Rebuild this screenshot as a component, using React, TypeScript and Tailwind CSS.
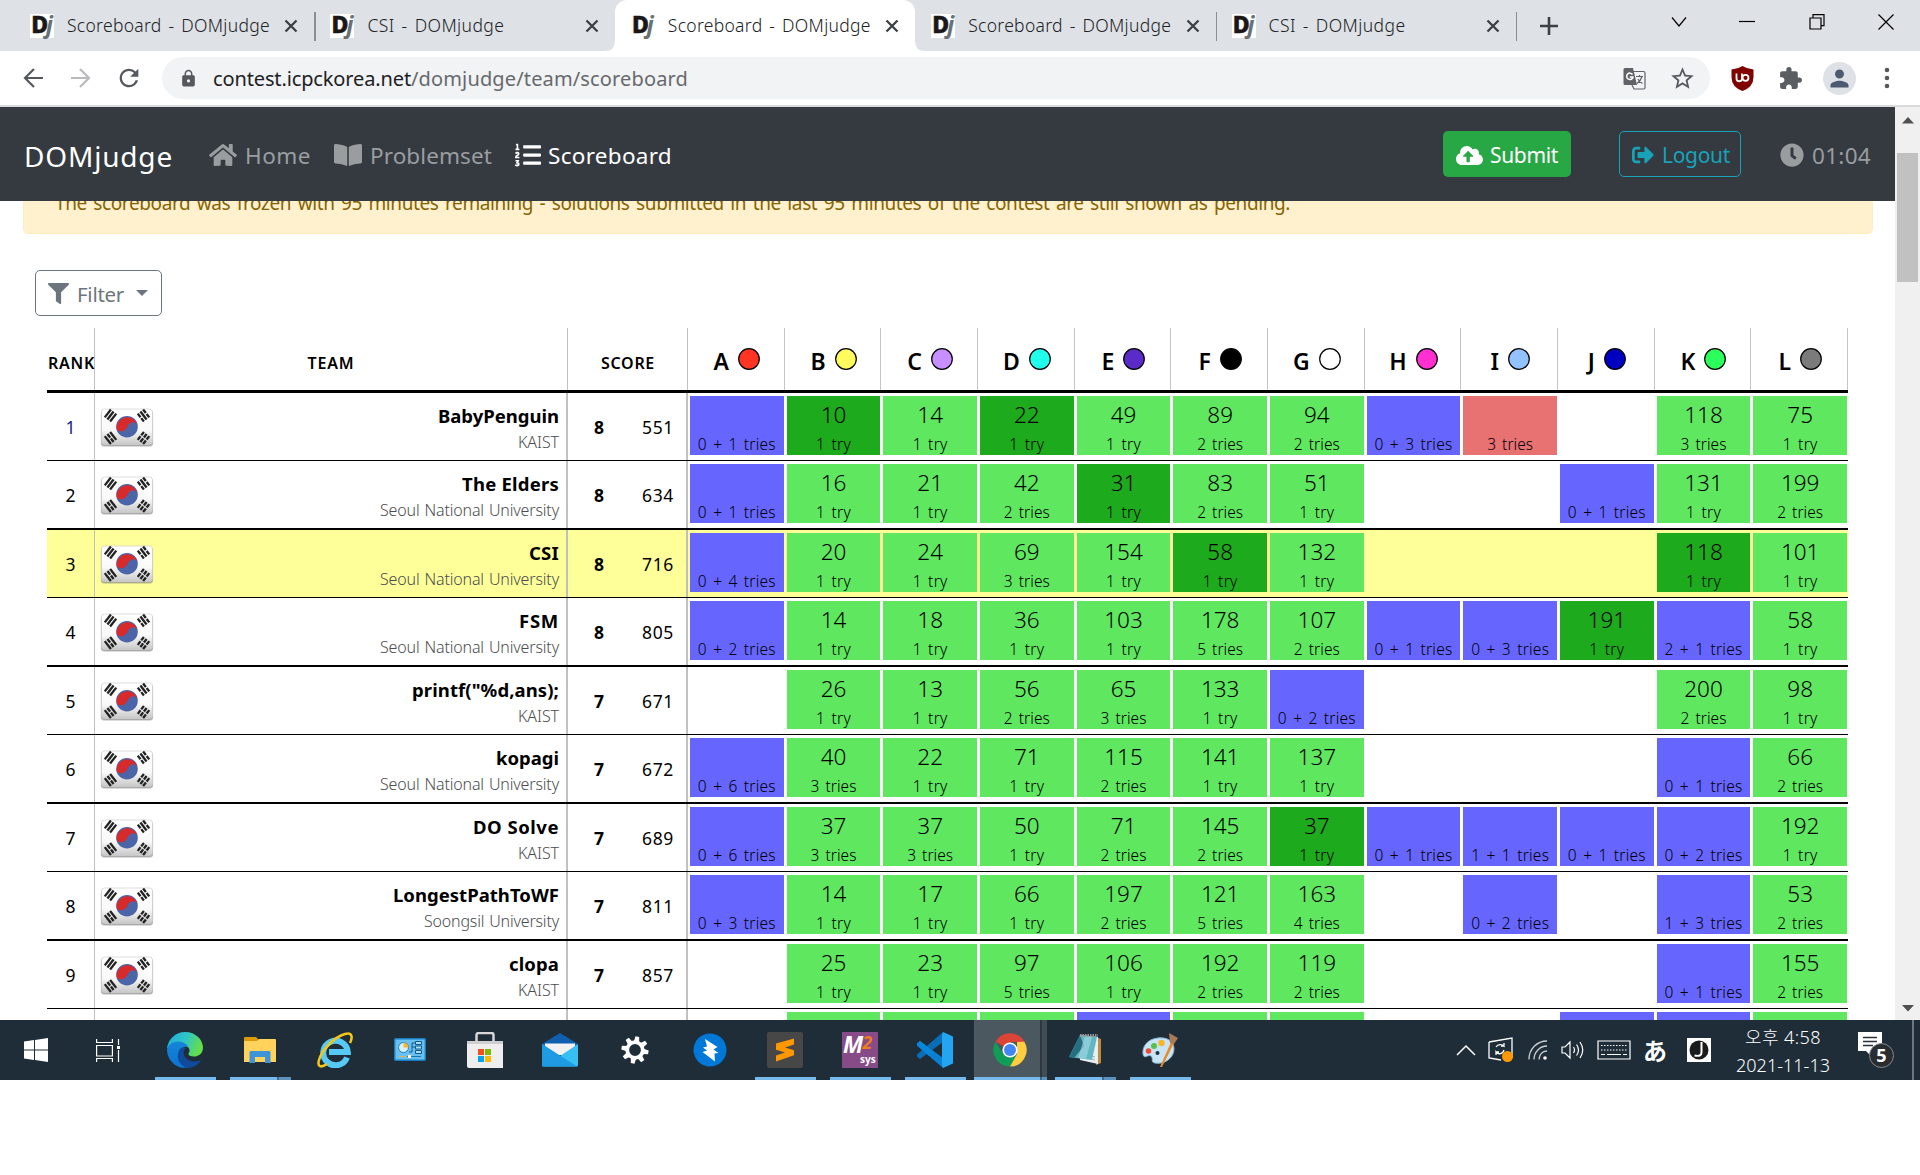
import { useLayoutEffect, useRef } from "react";
import type { ReactNode } from "react";
import { FaHome, FaBookOpen, FaListOl, FaCloudUploadAlt, FaSignOutAlt, FaClock, FaFilter } from "react-icons/fa";
import { MdStarBorder, MdExtension, MdLock, MdRefresh, MdPerson } from "react-icons/md";

/* Tracks a run of text so that it spans exactly `w` pixels. */
function Fit({ w, className = "", children }: { w: number; className?: string; children: ReactNode }) {
  const ref = useRef<HTMLSpanElement>(null);
  useLayoutEffect(() => {
    const el = ref.current;
    if (!el) return;
    el.style.letterSpacing = "0px";
    const n = (el.textContent || "").length;
    el.style.letterSpacing = (w - el.getBoundingClientRect().width) / n + "px";
  }, [w]);
  return (
    <span ref={ref} className={"inline-block whitespace-pre " + className}>
      {children}
    </span>
  );
}

const tabs = [
  { t: "Scoreboard - DOMjudge", w: 203 },
  { t: "CSI - DOMjudge", w: 137 },
  { t: "Scoreboard - DOMjudge", w: 203, active: true },
  { t: "Scoreboard - DOMjudge", w: 203 },
  { t: "CSI - DOMjudge", w: 137 },
];

function Tab({ t, w, active, sep }: { t: string; w: number; active?: boolean; sep: boolean }) {
  return (
    <div className={"relative flex h-[51px] w-[300.4px] items-center " + (active ? "rounded-t-xl bg-white" : "")}>
      {active && (
        <>
          <svg className="absolute bottom-0 -left-[10px]" width="10" height="10"><path d="M10 0v10H0Q10 10 10 0" fill="#fff" /></svg>
          <svg className="absolute -right-[10px] bottom-0" width="10" height="10"><path d="M0 0v10h10Q0 10 0 0" fill="#fff" /></svg>
        </>
      )}
      <div className="ml-[16px] flex h-6 w-6 items-center justify-center bg-white text-[23px] leading-6 font-extrabold tracking-[-2px] text-[#1b1718]">
        <span className="-mt-[4px] ml-[-2px] [-webkit-text-stroke:0.6px_#1b1718]">D</span><span className="-mt-[4px] font-bold text-[#6a7074] italic">j</span>
      </div>
      <div className="ml-[13px] flex-1 text-[17.500px] font-light text-[#202225] [word-spacing:2px]"><Fit w={w}>{t}</Fit></div>
      <svg className="mr-[16px]" width="14" height="14" viewBox="0 0 14 14"><path d="M1.500 1.500l11 11m0-11l-11 11" stroke="#3c4043" strokeWidth="2.300" /></svg>
      {sep && <div className="absolute top-3 -right-[1.500px] h-[29px] w-[1.500px] bg-[#8b8f94]" />}
    </div>
  );
}

function Browser() {
  return (
    <>
      <div className="flex h-[51px] bg-[#dee1e6] pl-[14px]">
        {tabs.map((t, i) => (
          <Tab key={i} {...t} sep={i !== 1 && i !== 2} />
        ))}
        <svg className="mt-[16px] ml-[23px]" width="20" height="20"><path d="M10 1v18M1 10h18" stroke="#3c4043" strokeWidth="2.600" /></svg>
        <div className="ml-auto flex pt-[14px] pr-[26px] text-black">
          <svg width="16" height="16" fill="none" stroke="currentColor" strokeWidth="1.200"><path d="M1 3.500l7 8.500 7-8.500" /></svg>
          <svg className="ml-[52px]" width="16" height="16" stroke="currentColor" strokeWidth="1.200"><path d="M0 7.500h16" /></svg>
          <svg className="ml-[54px]" width="16" height="16" fill="none" stroke="currentColor" strokeWidth="1.200"><path d="M1 4h11v11H1zM4 4V.7h11v11h-3" /></svg>
          <svg className="ml-[53px]" width="16" height="16" stroke="currentColor" strokeWidth="1.200"><path d="M.5.5l15 15m0-15l-15 15" /></svg>
        </div>
      </div>
      <div className="flex h-[56px] items-center border-b-2 border-[#d9dadc] bg-white">
        <svg className="ml-[23px]" width="20" height="20" fill="none" stroke="#55595e" strokeWidth="2.200"><path d="M20 10H2M11 1L2 10l9 9" /></svg>
        <svg className="ml-[28px]" width="20" height="20" fill="none" stroke="#b8babd" strokeWidth="2.200"><path d="M0 10h18M9 1l9 9-9 9" /></svg>
        <MdRefresh className="ml-[24px] text-[#55595e]" size={28} />
        <div className="ml-[19px] flex h-[42px] w-[1548px] items-center rounded-full bg-[#f1f3f4]">
          <MdLock className="ml-[17px] text-[#55595e]" size={19} />
          <div className="mt-[2px] ml-[15px] text-[20px] text-[#67696d]">
            <Fit w={198} className="text-[#202124]">contest.icpckorea.net</Fit>
            <Fit w={277}>/domjudge/team/scoreboard</Fit>
          </div>
          <svg className="ml-auto" width="23" height="23" viewBox="0 0 23 23">
            <path d="M9 4.500h11.500a1.500 1.500 0 011.500 1.500v14.500a1.500 1.500 0 01-1.500 1.500H11l-2-4" fill="none" stroke="#5f6368" strokeWidth="1.200" />
            <path d="M2 1h8l4 17H2a1.500 1.500 0 01-1.500-1.500v-14A1.500 1.500 0 012 1z" fill="#5f6368" />
            <path d="M9.500 7.500A3.200 3.200 0 1010 10H6.800" fill="none" stroke="#fff" strokeWidth="1.500" />
            <path d="M13 9.500h7M16.500 8v1.500M19 9.500c-.8 3-3 5.500-5 7M15 12c1 2 2.500 3.500 4.500 4.500" fill="none" stroke="#5f6368" strokeWidth="1.200" />
          </svg>
          <MdStarBorder className="mr-[14px] ml-[23px] text-[#55595e]" size={27} />
        </div>
        <svg className="ml-[21px]" width="23" height="25" viewBox="0 0 23 25">
          <path d="M11.500 0Q16 3 22.500 3.500V11Q22.500 21 11.500 25 .5 21 .5 11V3.500Q7 3 11.500 0z" fill="#800000" />
          <path d="M5.500 7.500v5a2.500 2.500 0 005.500 0v-5" fill="none" stroke="#fff" strokeWidth="1.800" />
          <circle cx="14.500" cy="11.800" r="3" fill="none" stroke="#fff" strokeWidth="1.800" />
        </svg>
        <MdExtension className="ml-[24px] text-[#5a5e63]" size={25} />
        <div className="ml-[20px] flex h-[33px] w-[33px] items-center justify-center rounded-full bg-[#dee1e6]"><MdPerson className="text-[#4d5b70]" size={27} /></div>
        <svg className="ml-[28px]" width="6" height="22" fill="#55595e"><circle cx="3" cy="3" r="2.300" /><circle cx="3" cy="11" r="2.300" /><circle cx="3" cy="19" r="2.300" /></svg>
      </div>
    </>
  );
}

function NavBar() {
  return (
    <nav className="flex h-[94px] items-center bg-[#343a40] text-[22.500px] text-[#9a9da0]">
      <Fit w={149} className="mt-[3px] ml-[24px] text-[28px] text-white">DOMjudge</Fit>
      <FaHome className="mt-[2px] ml-[36px]" size={28} />
      <Fit w={66} className="mt-[4px] ml-[8px]">Home</Fit>
      <FaBookOpen className="mt-[2px] ml-[23px]" size={28} />
      <Fit w={122} className="mt-[4px] ml-[8px]">Problemset</Fit>
      <FaListOl className="mt-[2px] ml-[23px] text-white" size={26} />
      <Fit w={124} className="mt-[4px] ml-[7px] text-white">Scoreboard</Fit>
      <div className="ml-auto flex h-[46px] w-[128px] items-center rounded-[5px] bg-[#28a745] text-[21px] text-white">
        <FaCloudUploadAlt className="mt-[2px] ml-[13px]" size={27} />
        <Fit w={68} className="mt-[4px] ml-[7px]">Submit</Fit>
      </div>
      <div className="ml-[48px] flex h-[46px] w-[122px] items-center rounded-[5px] border border-[#17a2b8] text-[21px] text-[#17a2b8]">
        <FaSignOutAlt className="mt-[2px] ml-[12px]" size={22} />
        <Fit w={68} className="mt-[4px] ml-[8px]">Logout</Fit>
      </div>
      <FaClock className="mt-[2px] ml-[39px]" size={24} />
      <Fit w={59} className="mt-[4px] mr-[24px] ml-[8px]">01:04</Fit>
    </nav>
  );
}

const problems: [string, string][] = [
  ["A", "#ff3422"], ["B", "#fffb5c"], ["C", "#c78fff"], ["D", "#1fffec"], ["E", "#5a2bc8"], ["F", "#000000"],
  ["G", "#ffffff"], ["H", "#ff2fd0"], ["I", "#92c3ff"], ["J", "#0000c0"], ["K", "#2cff5c"], ["L", "#7b7b7b"],
];

/* Cell notation: "time/tries", a leading * marks the first solver, p = pending, x = wrong. */
const teams: { name: string; nw: number; aff: string; n: number; s: number; cells: string }[] = [
  { name: "BabyPenguin", nw: 121, aff: "KAIST", n: 8, s: 551, cells: "p0 + 1|*10/1|14/1|*22/1|49/1|89/2|94/2|p0 + 3|x3||118/3|75/1" },
  { name: "The Elders", nw: 97, aff: "Seoul National University", n: 8, s: 634, cells: "p0 + 1|16/1|21/1|42/2|*31/1|83/2|51/1|||p0 + 1|131/1|199/2" },
  { name: "CSI", nw: 30, aff: "Seoul National University", n: 8, s: 716, cells: "p0 + 4|20/1|24/1|69/3|154/1|*58/1|132/1||||*118/1|101/1" },
  { name: "FSM", nw: 40, aff: "Seoul National University", n: 8, s: 805, cells: "p0 + 2|14/1|18/1|36/1|103/1|178/5|107/2|p0 + 1|p0 + 3|*191/1|p2 + 1|58/1" },
  { name: 'printf("%d,ans);', nw: 147, aff: "KAIST", n: 7, s: 671, cells: "|26/1|13/1|56/2|65/3|133/1|p0 + 2||||200/2|98/1" },
  { name: "kopagi", nw: 63, aff: "Seoul National University", n: 7, s: 672, cells: "p0 + 6|40/3|22/1|71/1|115/2|141/1|137/1||||p0 + 1|66/2" },
  { name: "DO Solve", nw: 86, aff: "KAIST", n: 7, s: 689, cells: "p0 + 6|37/3|37/3|50/1|71/2|145/2|*37/1|p0 + 1|p1 + 1|p0 + 1|p0 + 2|192/1" },
  { name: "LongestPathToWF", nw: 166, aff: "Soongsil University", n: 7, s: 811, cells: "p0 + 3|14/1|17/1|66/1|197/2|121/5|163/4||p0 + 2||p1 + 3|53/2" },
  { name: "clopa", nw: 50, aff: "KAIST", n: 7, s: 857, cells: "|25/1|23/1|97/5|106/1|192/2|119/2||||p0 + 1|155/2" },
];
const nextRow = ["", "g", "g", "g", "b", "g", "g", "", "", "b", "b", "g"];
const affWidth: Record<string, number> = { KAIST: 41, "Seoul National University": 179, "Soongsil University": 135 };

function Cell({ c }: { c: string }) {
  if (!c) return <div />;
  const kind = c[0];
  const plain = kind === "p" || kind === "x";
  const bg = kind === "p" ? "bg-[#6666ff]" : kind === "x" ? "bg-[#e87272]" : kind === "*" ? "bg-[#1daa1d]" : "bg-[#60e760]";
  const [time, tries] = plain ? ["", c.slice(1)] : c.replace("*", "").split("/");
  const label = tries + (tries === "1" ? " try" : " tries");
  return (
    <div className={"mt-[3px] mr-[1px] ml-[2px] flex h-[59px] flex-col items-center text-black " + bg}>
      <div className="h-[36px] shrink-0 text-[22.500px] leading-[38px] font-[350]">{time}</div>
      <div className="h-[23px] shrink-0 text-[15.500px] leading-[25px] font-light [word-spacing:2px]"><Fit w={label.length > 7 ? 78 : label.length > 5 ? 46 : 35}>{label}</Fit></div>
    </div>
  );
}

function Bars({ x, y, a, gaps }: { x: number; y: number; a: number; gaps: number[] }) {
  return (
    <g transform={`translate(${x} ${y}) rotate(${a})`}>
      {[-3.4, 0, 3.4].map((d, i) => (
        <path key={i} d={gaps.includes(i) ? `M-5 ${d}h4.500M.7 ${d}h4.300` : `M-5 ${d}h10`} stroke="#222" strokeWidth="2.300" />
      ))}
    </g>
  );
}

function Flag() {
  return (
    <svg width="54" height="40" viewBox="0 0 54 40">
      <defs>
        <linearGradient id="flagShade" x1="0" y1="0" x2="0" y2="1"><stop offset="0" stopColor="#fff" /><stop offset=".6" stopColor="#f9f9f9" /><stop offset="1" stopColor="#c8c8c8" /></linearGradient>
      </defs>
      <rect x=".7" y="2.500" width="52.500" height="36.500" rx="4" fill="#888" opacity=".3" />
      <rect x="1" y="2" width="52" height="36" rx="3.500" fill="#888" opacity=".6" />
      <rect x="1.500" y="1" width="51" height="35.500" rx="3" fill="url(#flagShade)" stroke="#cfcfcf" strokeWidth=".7" />
      <circle cx="27" cy="18.700" r="10.800" fill="#4c64a8" />
      <path d="M16.500 20.500A10.800 10.800 0 0137.500 16.500C34 12.500 29.500 14 27.500 18.500 26 22.500 20 26 16.500 20.500z" fill="#d82a2a" />
      <Bars x={10.500} y={7.500} a={-52} gaps={[]} />
      <Bars x={43.500} y={7.500} a={52} gaps={[0, 2]} />
      <Bars x={10.500} y={30} a={52} gaps={[1]} />
      <Bars x={43.500} y={30} a={-52} gaps={[0, 1, 2]} />
    </svg>
  );
}

function Scoreboard() {
  return (
    <div className="ml-[47px] w-[1801px] text-black">
      <div className="flex h-[65px] border-b-[3px] border-black text-[16px] font-semibold">
        <div className="w-[48px] border-r border-[#c0c0c0] pt-[23px] pl-[1px] whitespace-nowrap"><Fit w={47}>RANK</Fit></div>
        <div className="w-[473px] border-r-[1.500px] border-[#c0c0c0] pt-[23px] text-center"><Fit w={47}>TEAM</Fit></div>
        <div className="w-[120px] border-r-[1.500px] border-[#c0c0c0] pt-[23px] pl-[1px] text-center"><Fit w={54}>SCORE</Fit></div>
        <div className="grid flex-1 grid-cols-12">
          {problems.map(([p, color]) => (
            <div key={p} className="flex justify-center border-r border-[#c4c4c4] pt-[15px] pl-[2px] text-[23px] leading-[36px]">
              {p}
              <svg className="mt-[5px] ml-[9px]" width="22" height="22"><circle cx="11" cy="11" r="10.300" fill={color} stroke="#000" strokeWidth="1.200" /></svg>
            </div>
          ))}
        </div>
      </div>
      {teams.map((t, i) => (
        <div key={t.name} className={"flex border-black " + (i % 2 ? "h-[69px] border-b-2 " : "h-[68px] border-b ") + (i === 2 ? "bg-[#ffff99]" : "")}>
          <div className={"w-[48px] border-r border-[#c0c0c0] text-center text-[17.500px] leading-[69px] " + (i === 0 ? "text-[#22228a]" : "")}>{i + 1}</div>
          <div className="flex w-[473px] justify-between border-r-2 border-[#c0c0c0] pr-[7px] pl-[5px]">
            <div className="pt-[15px]"><Flag /></div>
            <div className="flex flex-col items-end pt-[10px]">
              <Fit w={t.nw} className="text-[18.500px] leading-[26px] font-bold">{t.name}</Fit>
              <Fit w={affWidth[t.aff]} className="text-[16px] leading-[26px] font-light text-[#4b4d4f] [word-spacing:1px]">{t.aff}</Fit>
            </div>
          </div>
          <div className="flex w-[120px] border-r-2 border-[#c0c0c0] text-[17.500px] leading-[69px]">
            <div className="w-[62px] text-center font-bold">{t.n}</div>
            <div className="w-[56px] text-center"><Fit w={32}>{t.s}</Fit></div>
          </div>
          <div className="grid flex-1 grid-cols-12">
            {t.cells.split("|").map((c, j) => <Cell key={j} c={c} />)}
          </div>
        </div>
      ))}
      <div className="flex h-[11px]">
        <div className="w-[48px] border-r border-[#c0c0c0]" />
        <div className="w-[473px] border-r-2 border-[#c0c0c0]" />
        <div className="w-[120px] border-r-2 border-[#c0c0c0]" />
        <div className="grid flex-1 grid-cols-12">
          {nextRow.map((k, j) => (
            <div key={j} className={"mt-[3px] mr-[1px] ml-[2px] " + (k === "g" ? "bg-[#60e760]" : k === "b" ? "bg-[#6666ff]" : "")} />
          ))}
        </div>
      </div>
    </div>
  );
}

const apps: { icon: ReactNode; line?: "one" | "stack"; active?: boolean }[] = [
  {
    line: "one",
    icon: (
      <svg width="36" height="36" viewBox="0 0 36 36">
        <defs>
          <linearGradient id="edgeTop" x1="0" x2="1" y1="0" y2=".3"><stop offset="0" stopColor="#1fa8dc" /><stop offset=".55" stopColor="#2fc6c8" /><stop offset="1" stopColor="#63dd4b" /></linearGradient>
          <linearGradient id="edgeLeft" x1="0" x2="0" y1="0" y2="1"><stop offset="0" stopColor="#1585d8" /><stop offset="1" stopColor="#0c74cf" /></linearGradient>
        </defs>
        <path d="M0 17A18 18 0 0118 0C29 0 36 8 36 15.500 36 22 31 24.500 27 24.500c-5 0-6.500-2-5-4 1.500-2 0-6-4-7C10 10 3 12 0 17z" fill="url(#edgeTop)" />
        <path d="M0 18C1 11 9 8 15 10c3 1 6 3 6.500 6-3-3-9 0-9 7 0 8 7 13 11 12A18 18 0 010 18z" fill="url(#edgeLeft)" />
        <path d="M13 17c-5 7-1 17 8 19 6 0 11-4 13-8-6 3-15 1-17-5-.8-3 0-5 1.500-7-2-1-4-.5-5.500 1z" fill="#114a9a" />
      </svg>
    ),
  },
  {
    line: "stack",
    icon: (
      <svg width="32" height="28" viewBox="0 0 32 28">
        <path d="M0 2a1 1 0 011-1h11l3 3v6H0z" fill="#dc9a08" /><path d="M0 5h13l2-2h16a1 1 0 011 1v22H0z" fill="#ffd25c" />
        <path d="M5.500 27V16a1.500 1.500 0 011.500-1h18a1.500 1.500 0 011.500 1v11H21v-6H11v6z" fill="#3d95d8" />
      </svg>
    ),
  },
  {
    icon: (
      <svg width="36" height="36" viewBox="0 0 36 36">
        <path d="M30 25.500A12.300 12.300 0 1130.800 20H12" fill="none" stroke="#56c9f5" strokeWidth="6" />
        <path d="M33 11C36 5 35 0 28 2 17 5 5 18 2 28c-2 7 2 8 8 4" fill="none" stroke="#f5c518" strokeWidth="2.600" />
      </svg>
    ),
  },
  {
    icon: (
      <svg width="32" height="24" viewBox="0 0 32 24">
        <rect x=".7" y=".7" width="30.600" height="21.600" rx="1" fill="#69bff0" stroke="#177fbe" strokeWidth="1.400" />
        <circle cx="9.500" cy="9.500" r="5" fill="#d9f0ff" stroke="#1a80c0" /><path d="M9.500 9.500v-5a5 5 0 015 5z" fill="#f7b52c" />
        <path d="M15 14h3V5h4M18 9h4" fill="none" stroke="#14598a" /><path d="M21.500 3.500h6v3h-6zM21.500 8h6v3h-6zM21.500 12.500h6v3h-6z" fill="#a9def9" stroke="#14598a" />
        <path d="M5 18.500h7" stroke="#e3b64d" /><path d="M13 18.500h14" stroke="#1a75b5" /><path d="M14 17h3v3h-3z" fill="#fff" />
      </svg>
    ),
  },
  {
    icon: (
      <svg width="36" height="36" viewBox="0 0 36 36">
        <path d="M9.500 11V3a2 2 0 012-2h13a2 2 0 012 2v8" fill="none" stroke="#d8d8d8" strokeWidth="2.500" /><path d="M0 9h36v27H2a2 2 0 01-2-2z" fill="#eeeeee" /><path d="M0 9h36v3H0z" fill="#cfcfcf" />
        <path d="M11 17h6v6h-6z" fill="#f25022" /><path d="M18 17h6v6h-6z" fill="#7fba00" /><path d="M11 24h6v6h-6z" fill="#00a4ef" /><path d="M18 24h6v6h-6z" fill="#ffb900" />
      </svg>
    ),
  },
  {
    icon: (
      <svg width="36" height="34" viewBox="0 0 36 34">
        <path d="M0 11L18 0l18 11v3H0z" fill="#0f5fae" /><path d="M3 10.500h30V22H3z" fill="#f2f2f2" />
        <path d="M0 11l18 12L36 11v21a1.500 1.500 0 01-1.500 1.500h-33A1.500 1.500 0 010 32z" fill="#36c0f3" /><path d="M0 11l35 22.500H1.500A1.500 1.500 0 010 32z" fill="#1f9be4" />
      </svg>
    ),
  },
  {
    icon: (
      <svg width="28" height="28" viewBox="-14 -14 28 28">
        {[0, 45, 90, 135, 180, 225, 270, 315].map((a) => <path key={a} d="M-2.700-8l.8-5.600h3.800l.8 5.600z" fill="#fff" transform={`rotate(${a + 10})`} />)}
        <circle r="7.800" fill="none" stroke="#fff" strokeWidth="3.800" />
      </svg>
    ),
  },
  { icon: <svg width="34" height="34" viewBox="0 0 34 34"><circle cx="17" cy="17" r="16.500" fill="#0078d7" /><path d="M12 6l12.500 8-4 2.500 5 3.500-4 .5.500 8L9.500 19l4.500-1.500-4-3 4-1z" fill="#fff" /></svg> },
  {
    line: "one",
    icon: (
      <svg width="36" height="36" viewBox="0 0 36 36"><rect width="36" height="36" rx="2" fill="#474747" /><path d="M9 11.500L27 6.500v6l-9 3 9 2.800v5L9 29.500v-6l9-3-9-2.800z" fill="#ff9800" /></svg>
    ),
  },
  {
    line: "one",
    icon: (
      <div className="flex h-9 w-9 flex-col bg-[#874c88] font-bold text-white">
        <div className="flex h-[22px] items-start pl-[1px] text-[23px] leading-[24px] tracking-[-1px] italic">
          M<span className="text-[18px] leading-[20px] text-[#ef7d1a]">2</span>
        </div>
        <div className="h-[14px] pl-[18px] text-[10px] leading-[11px]">sys</div>
      </div>
    ),
  },
  {
    line: "one",
    icon: (
      <svg width="36" height="36" viewBox="0 0 36 36"><path d="M3 9L0 11.500v2L26 36V26z" fill="#0a80d3" /><path d="M3 27L0 24.500v-2L26 0v10z" fill="#0a6db5" /><path d="M3 9L0 11.500v2L12 24l5-4z" fill="#0a86d8" /><path d="M26 0l10 4.500v27L26 36l-1-3V3z" fill="#23a5f2" /></svg>
    ),
  },
  {
    line: "stack",
    active: true,
    icon: (
      <svg width="34" height="34" viewBox="-17 -17 34 34">
        <path d="M0 0L-14.400-8.300A16.600 16.600 0 0114.400-8.300L14.400-8H0z" fill="#db4437" /><path d="M-14.400-8.300A16.600 16.600 0 000 16.600L7 4-7 4z" fill="#0f9d58" /><path d="M14.400-8.300A16.600 16.600 0 010 16.600L7 4V-8z" fill="#ffcd40" />
        <circle r="7.600" fill="#fff" /><circle r="6" fill="#4285f4" />
      </svg>
    ),
  },
  {
    line: "stack",
    icon: (
      <svg width="34" height="32" viewBox="0 0 34 32">
        <path d="M28 3l5 2v24l-5 2z" fill="#bd8c42" /><path d="M12 1l18 2v27l-18-4z" fill="#e9eef0" /><path d="M16 23l11 3M16 20l11 3" stroke="#a8b3b8" /><path d="M12 1l17 2-5 23L1 23z" fill="#62b6c4" /><path d="M12 1L1 23l5 1 10-12z" fill="#266f80" /><path d="M17 2l-7 22 8 1 6-22z" fill="#a6dbe4" opacity=".6" /><path d="M12 1.500h18" stroke="#999" strokeWidth="3" strokeDasharray="1.500 1" />
      </svg>
    ),
  },
  {
    line: "one",
    icon: (
      <svg width="38" height="36" viewBox="0 0 38 36">
        <path d="M17 6C6 7 1 15 2 22c1 6 5 0 8 2 3 3-1 6 4 7 9 2 19-5 19-14C33 9 26 5 17 6z" fill="#c9e4f5" stroke="#86b7d8" />
        <circle cx="7.500" cy="19" r="2.800" fill="#ee4b37" /><circle cx="13" cy="14" r="3" fill="#59c14b" /><circle cx="20.500" cy="11" r="3.200" fill="#f8b52b" /><circle cx="16.500" cy="21" r="2" fill="#1d3443" />
        <path d="M30 10l3 1-12 24-2 0z" fill="#ea8b28" /><path d="M28 1l9 5-4 6-4-1z" fill="#a87a55" />
      </svg>
    ),
  },
];

function Taskbar() {
  return (
    <div className="flex h-[60px] bg-[#1e2d38] text-white">
      <div className="flex w-[72px] items-center justify-center">
        <svg width="24" height="24"><path d="M0 3.500l10-1.500v9.500H0zM11 1.900L24 0v11.500H11zM0 12.500h10V22L0 20.500zM11 12.500h13V24l-13-1.900z" fill="#fff" /></svg>
      </div>
      <div className="flex w-[75.500px] items-center justify-center">
        <svg className="-ml-[2px]" width="25" height="25" fill="none" stroke="#fff" strokeWidth="1.200"><path d="M.6 1v3.500h15.800V1M.6 7.500h15.800v10.500H.6zM.6 24v-3.500h15.800V24M22.500 1v6M22.500 12v12" /><path d="M21 8h3v3h-3z" fill="#fff" stroke="none" /></svg>
      </div>
      {apps.map((a, i) => (
        <div key={i} className="relative flex w-[75px] items-center justify-center">
          {a.active && <div className="absolute top-0 left-[1.500px] flex h-full"><div className="w-[66px] bg-[#4c5860]" /><div className="w-[2px] bg-[#2d373e]" /><div className="w-[5px] bg-[#414c54]" /></div>}
          <div className="relative">{a.icon}</div>
          {a.line === "one" && <div className="absolute bottom-0 left-[7.500px] h-[3px] w-[61px] bg-[#76b9ed]" />}
          {a.line === "stack" && (
            <div className={"absolute bottom-0 flex h-[3px] " + (a.active ? "left-[1.500px]" : "left-[7.500px]")}>
              <div className={(a.active ? "w-[66px]" : "w-[47px]") + " bg-[#76b9ed]"} />
              <div className="w-[2px] bg-[#426a88]" />
              <div className={(a.active ? "w-[5px]" : "w-[12px]") + " bg-[#5c92bc]"} />
            </div>
          )}
        </div>
      ))}
      <div className="ml-auto flex items-center">
        <svg width="20" height="12" fill="none" stroke="#fff" strokeWidth="1.500"><path d="M1 11l9-9 9 9" /></svg>
        <svg className="ml-[12px]" width="26" height="26" fill="none" stroke="#fff" strokeWidth="1.300">
          <path d="M1 5l23-4v20M1 5v16l12 2" /><path d="M8 10c2-3 6-3 8-1V6m0 3h-3M16 13c-1 4-6 5-8 2v3m0-3h3" /><circle cx="19.500" cy="19.500" r="5.500" fill="#ff9800" stroke="none" />
        </svg>
        <svg className="ml-[14px]" width="20" height="20" fill="none" stroke="#c9cfd3" strokeWidth="1.300">
          <path d="M1 19.500C1 9 9 1 19 1M6 19.500C6 12 12 6 19 6M11 19.500C11 15 14 11 19 11" /><circle cx="17" cy="18" r="1.800" fill="#fff" stroke="none" />
        </svg>
        <svg className="ml-[13px]" width="24" height="20" fill="none" stroke="#fff" strokeWidth="1.200"><path d="M1 7v6h3l5 5V2L4 7zM12.500 7q2 3 0 6M15.500 4.500q4 5.500 0 11M19 2q5.500 8 0 16" /></svg>
        <svg className="ml-[12px]" width="34" height="20" fill="none" stroke="#fff" strokeWidth="1.200"><path d="M1 1h32v18H1zM4 14.500h4M10 14.500h14M26 14.500h4" /><path d="M4 5.500h26M4 10h26" strokeDasharray="1.500 1.500" /></svg>
        <div className="mt-[2px] ml-[11px] w-[26px] text-center text-[24px] leading-[28px] font-semibold">あ</div>
        <svg className="ml-[19px]" width="24" height="24"><path d="M0 0h24v24H0z" fill="#fff" /><circle cx="12" cy="12" r="9.500" fill="#1b1b1b" /><path d="M14.500 4v10.500q0 4.500-7 3" fill="none" stroke="#fff" strokeWidth="2" /></svg>
        <div className="mt-[2px] ml-[25px] flex w-[94px] flex-col items-center text-[18px] leading-[28px] font-light text-white">
          <Fit w={76}>오후 4:58</Fit>
          <Fit w={94}>2021-11-13</Fit>
        </div>
        <div className="relative ml-[28px] h-[36px] w-[37px]">
          <svg width="26" height="26"><path d="M0 0h24v19h-10v6l-6-6H0z" fill="#fff" /><path d="M5 5.500h14M5 9.500h14M5 13.500h10" stroke="#26333c" strokeWidth="1.300" /></svg>
          <div className="absolute top-[11px] left-[11px] flex h-[25px] w-[25px] items-center justify-center rounded-full border border-[#84888b] bg-[#2a2d30] text-[18px] font-bold">5</div>
        </div>
        <div className="ml-[17px] h-[60px] w-[2px] bg-[#6d777f]" />
        <div className="w-[6px]" />
      </div>
    </div>
  );
}

export default function App() {
  return (
    <div className="h-[1175px] w-[1920px] overflow-hidden bg-white font-['Noto_Sans','Noto_Sans_CJK_KR',sans-serif]">
      <Browser />
      <div className="flex h-[913px]">
        <main className="w-[1895px] overflow-hidden">
          <NavBar />
          <div className="ml-[23px] h-[33px] w-[1850px] overflow-hidden rounded-b-[5px] border border-t-0 border-[#ffeeba] bg-[#fff1cd] pl-[31px] text-[19px] leading-[26px] text-[#856404]">
            <div className="-mt-[11px] [word-spacing:2px]"><Fit w={1235}>The scoreboard was frozen with 95 minutes remaining - solutions submitted in the last 95 minutes of the contest are still shown as pending.</Fit></div>
          </div>
          <div className="mt-[36px] ml-[35px] flex h-[46px] w-[127px] items-center rounded-[5px] border border-[#6c757d] text-[20.500px] text-[#6c757d]">
            <FaFilter className="ml-[12px]" size={21} />
            <Fit w={47} className="mt-[3px] ml-[8px]">Filter</Fit>
            <svg className="ml-[12px]" width="12" height="6"><path d="M0 0h12L6 6z" fill="currentColor" /></svg>
          </div>
          <div className="h-[12px]" />
          <Scoreboard />
        </main>
        <aside className="flex w-[25px] flex-col items-center bg-[#f0f0f0]">
          <svg className="mt-[10px]" width="12" height="7"><path d="M0 6.500h12L6 0z" fill="#505050" /></svg>
          <div className="mt-[29px] h-[129px] w-[21px] bg-[#c1c1c1]" />
          <svg className="mt-auto mb-[8px]" width="12" height="7"><path d="M0 0h12L6 6.500z" fill="#505050" /></svg>
        </aside>
      </div>
      <Taskbar />
    </div>
  );
}
